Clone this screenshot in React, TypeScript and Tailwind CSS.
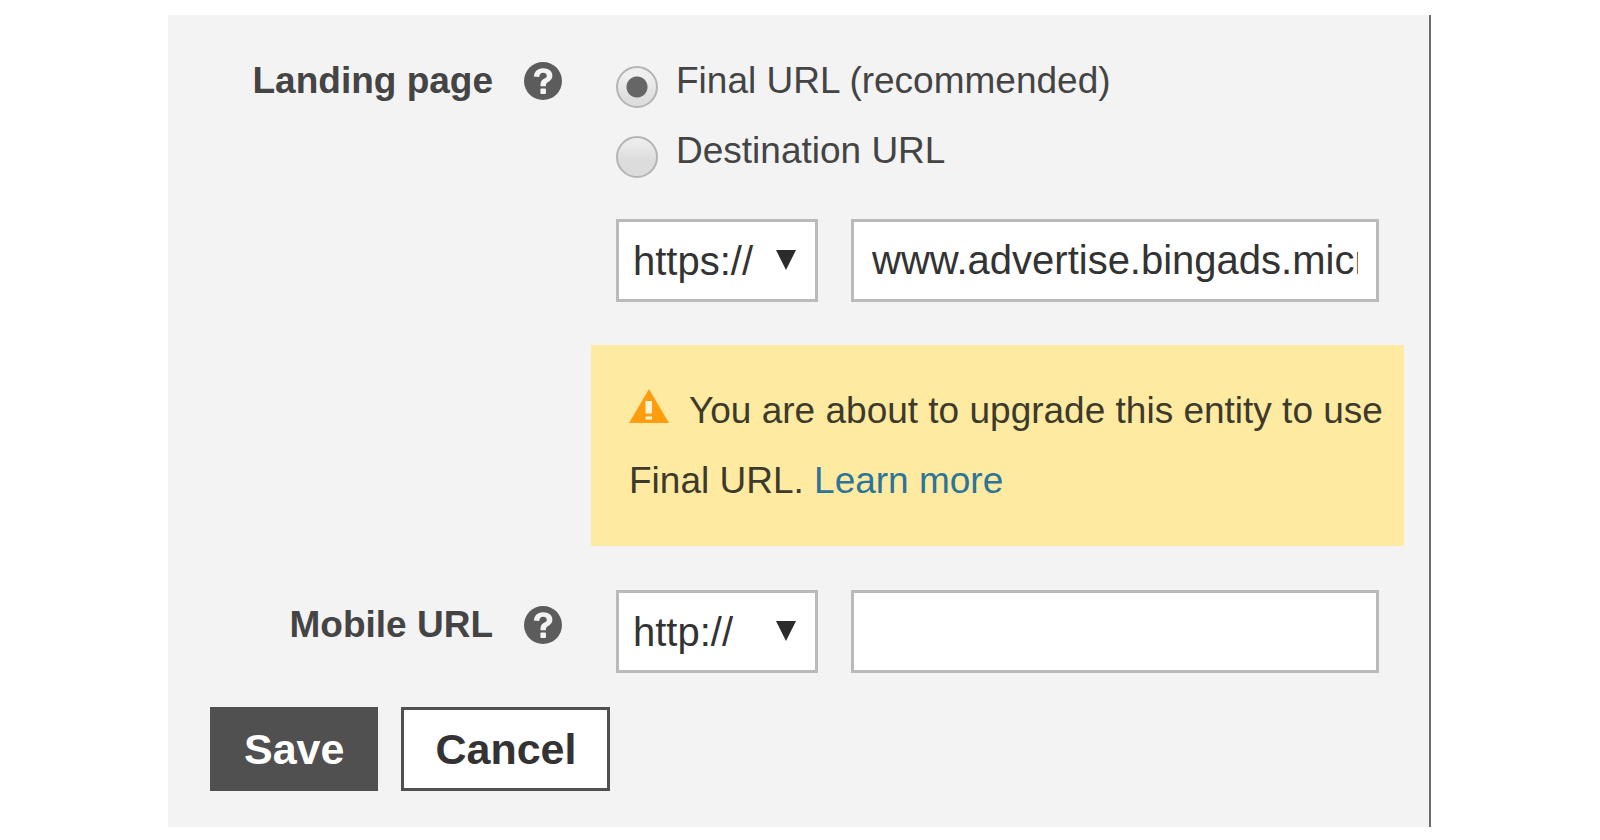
import { useState } from "react";
import type { ReactNode } from "react";

type LandingType = "final" | "destination";

function HelpIcon() {
  return (
    <svg viewBox="0 0 38 38" className="size-[38px]" aria-hidden="true">
      <circle cx="19" cy="19" r="19" fill="#5c5c5c" />
      <path
        d="M9.800 14.600C10.400 9 14 6.200 19.200 6.200c5.400 0 9.200 2.800 9.200 7.400 0 3.200-1.700 4.900-4.200 6.300-1.900 1.100-2.300 1.700-2.300 4.300h-5.400c0-4.300.9-5.900 3.900-7.600 1.600-.9 2.400-1.500 2.400-2.900 0-1.800-1.400-2.900-3.600-2.900-2.300 0-3.700 1.300-4 4.300z"
        fill="#f3f3f3"
      />
      <rect x="16.400" y="26.600" width="5.600" height="5.400" rx="1" fill="#f3f3f3" />
    </svg>
  );
}

function WarningIcon() {
  return (
    <svg viewBox="0 0 40 34" className="mr-5 inline h-[34px] w-10 align-baseline" aria-hidden="true">
      <path d="M20 0 40 34H0Z" fill="#ff9d0f" />
      <path d="M16.500 12h6.500v12.500h-6.500zM16.500 27.500h6.500v3h-6.500z" fill="#fdf3cf" />
    </svg>
  );
}

function HelpButton({ label }: { label: string }) {
  return (
    <button type="button" aria-label={label} className="mr-[54px] ml-[31px] flex h-[70px] shrink-0 items-center">
      <HelpIcon />
    </button>
  );
}

interface RadioProps {
  id: LandingType;
  checked: boolean;
  onSelect: (id: LandingType) => void;
  children: ReactNode;
}

function RadioOption({ id, checked, onSelect, children }: RadioProps) {
  return (
    <label className="flex h-[70px] items-end text-[37px] leading-[70px]">
      <input
        type="radio"
        name="landing"
        checked={checked}
        onChange={() => onSelect(id)}
        className="mr-[18px] mb-2 size-[42px] shrink-0 appearance-none rounded-full border-2 border-[#b4b4b4] bg-linear-to-b from-[#ececec] from-10% to-[#dcdcdc] to-60% checked:bg-[radial-gradient(circle,#666_10px,transparent_11px),linear-gradient(#efefef_20%,#dedede_80%)]"
      />
      {children}
    </label>
  );
}

interface UrlFieldProps {
  name: string;
  protocol: string;
  value: string;
  onProtocolChange: (protocol: string) => void;
  onChange: (value: string) => void;
}

function UrlField({ name, protocol, value, onProtocolChange, onChange }: UrlFieldProps) {
  return (
    <div className="flex gap-[33px] text-[40px] text-[#333]">
      <div className="relative w-[202px] shrink-0">
        <select
          aria-label={`${name} protocol`}
          value={protocol}
          onChange={(e) => onProtocolChange(e.target.value)}
          className="h-[83px] w-full appearance-none border-3 border-[#bababa] bg-white pl-[14px]"
        >
          <option>http://</option>
          <option>https://</option>
        </select>
        <svg
          viewBox="0 0 20 20"
          className="pointer-events-none absolute top-[31px] right-[22px] size-5"
          aria-hidden="true"
        >
          <path d="M0 0h20L10 20Z" fill="#2b2b2b" />
        </svg>
      </div>
      <input
        type="text"
        aria-label={name}
        value={value}
        onChange={(e) => onChange(e.target.value)}
        className="h-[83px] min-w-0 flex-1 border-3 border-[#bababa] bg-white px-[18px]"
      />
    </div>
  );
}

export default function App() {
  const [landingType, setLandingType] = useState<LandingType>("final");
  const [protocol, setProtocol] = useState("https://");
  const [url, setUrl] = useState("www.advertise.bingads.microsoft.com");
  const [mobileProtocol, setMobileProtocol] = useState("http://");
  const [mobileUrl, setMobileUrl] = useState("");

  return (
    <div className="min-h-screen bg-white pt-[15px] font-['Liberation_Sans',Arial,sans-serif]">
      <form
        onSubmit={(e) => e.preventDefault()}
        className="mr-[169px] ml-[168px] border-r-2 border-[#6b6b6b] bg-[#f3f3f3] pt-[31px] pr-[50px] pb-9 text-[#444]"
      >
        <div className="flex items-start">
          <div className="w-[325px] shrink-0 text-right text-[37px] leading-[70px] font-bold">Landing page</div>
          <HelpButton label="Landing page help" />
          <div className="min-w-0 flex-1">
            <div className="mb-[33px]">
              <RadioOption id="final" checked={landingType === "final"} onSelect={setLandingType}>
                Final URL (recommended)
              </RadioOption>
              <RadioOption id="destination" checked={landingType === "destination"} onSelect={setLandingType}>
                Destination URL
              </RadioOption>
            </div>
            <UrlField
              name="Landing page URL"
              protocol={protocol}
              value={url}
              onProtocolChange={setProtocol}
              onChange={setUrl}
            />
            <div className="-mx-[25px] mt-[43px] mb-11 bg-[#feeba1] pt-[31px] pr-3 pb-[30px] pl-[38px] text-[37px] leading-[70px] text-[#3d3a2c]">
              <WarningIcon />
              You are about to upgrade this entity to use Final URL.{" "}
              <a href="#learn-more" className="text-[#2e7398]">
                Learn more
              </a>
            </div>
          </div>
        </div>

        <div className="flex items-start">
          <div className="w-[325px] shrink-0 text-right text-[37px] leading-[70px] font-bold">Mobile URL</div>
          <HelpButton label="Mobile URL help" />
          <div className="min-w-0 flex-1">
            <UrlField
              name="Mobile URL"
              protocol={mobileProtocol}
              value={mobileUrl}
              onProtocolChange={setMobileProtocol}
              onChange={setMobileUrl}
            />
          </div>
        </div>

        <div className="mt-[34px] ml-[42px] flex gap-[23px] text-[43px] font-bold">
          <button type="submit" className="h-[84px] border-3 border-[#505050] bg-[#505050] px-[31px] text-white">
            Save
          </button>
          <button type="button" className="h-[84px] border-3 border-[#505050] bg-white px-[31px] text-[#333]">
            Cancel
          </button>
        </div>
      </form>
    </div>
  );
}
